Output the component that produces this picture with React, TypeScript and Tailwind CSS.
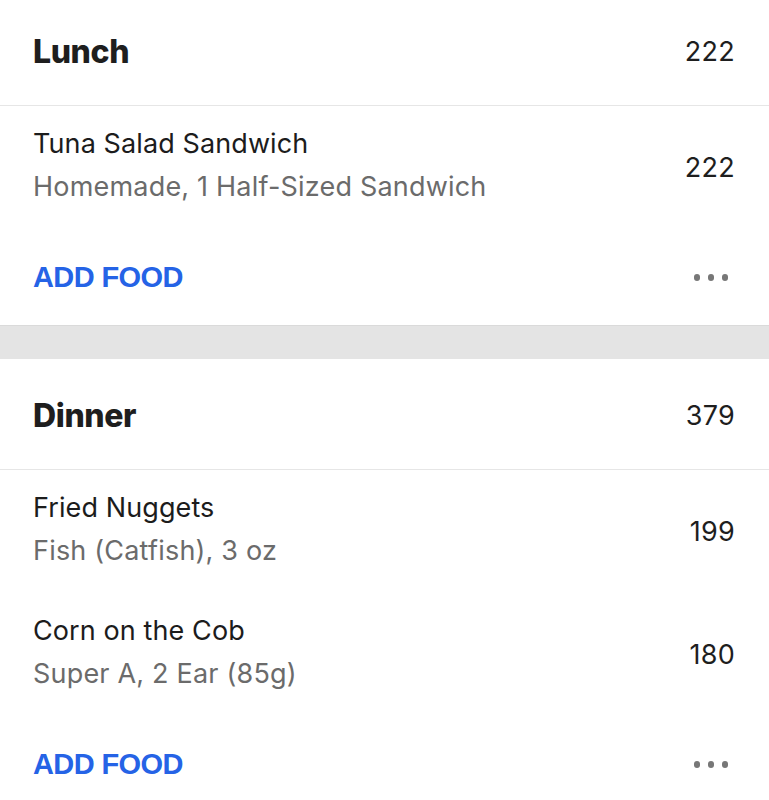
import React from "react";

type Item = { name: string; detail: string; cal: number };
type Meal = { title: string; total: number; items: Item[] };

const meals: Meal[] = [
  {
    title: "Lunch",
    total: 222,
    items: [{ name: "Tuna Salad Sandwich", detail: "Homemade, 1 Half-Sized Sandwich", cal: 222 }],
  },
  {
    title: "Dinner",
    total: 379,
    items: [
      { name: "Fried Nuggets", detail: "Fish (Catfish), 3 oz", cal: 199 },
      { name: "Corn on the Cob", detail: "Super A, 2 Ear (85g)", cal: 180 },
    ],
  },
];

const sans = { fontFamily: "Inter, 'Noto Sans', sans-serif" };

function Dots() {
  return (
    <div className="flex items-center gap-[7.5px] pr-[7px] pt-[1px]">
      <span className="block w-[6.5px] h-[6.5px] rounded-full bg-[#777777]" />
      <span className="block w-[6.5px] h-[6.5px] rounded-full bg-[#777777]" />
      <span className="block w-[6.5px] h-[6.5px] rounded-full bg-[#777777]" />
    </div>
  );
}

function MealSection({ meal }: { meal: Meal }) {
  return (
    <section className="bg-white">
      <div className="h-[111px] flex items-center justify-between pl-[33px] pr-[34px] border-b border-[#e6e6e6]" style={sans}>
        <span className="font-extrabold text-[32px] tracking-[-0.4px] text-[#1e1e1e] pt-[3px]">
          {meal.title}
        </span>
        <span className="text-[27px] tracking-[0.3px] text-[#1e1e1e] pt-[4px]">{meal.total}</span>
      </div>
      {meal.items.map((it) => (
        <div key={it.name} className="h-[123px] flex items-center justify-between pl-[33px] pr-[34px]" style={sans}>
          <div className="flex flex-col pb-[4px]">
            <span className="text-[27px] leading-[36px] tracking-[0.1px] text-[#1c1c1c]">{it.name}</span>
            <span className="text-[27px] leading-[36px] tracking-[0.2px] mt-[7px] text-[#6b6b6b]">{it.detail}</span>
          </div>
          <span className="text-[27px] tracking-[0.3px] text-[#1e1e1e] pt-[1px]">{it.cal}</span>
        </div>
      ))}
      <div className="h-[96px] flex items-center justify-between pl-[33px] pr-[34px]">
        <span className="font-['Liberation_Sans',Arial,sans-serif] font-bold text-[29px] tracking-[-0.6px] text-[#2563e6] pt-[2px]">
          ADD FOOD
        </span>
        <Dots />
      </div>
    </section>
  );
}

export default function App() {
  return (
    <div className="w-[769px] h-[800px] overflow-hidden bg-white">
      <div className="-mt-[5px]">
        <MealSection meal={meals[0]} />
        <div className="h-[34px] bg-[#e4e4e4] border-t border-[#dadada]" />
        <MealSection meal={meals[1]} />
      </div>
    </div>
  );
}
